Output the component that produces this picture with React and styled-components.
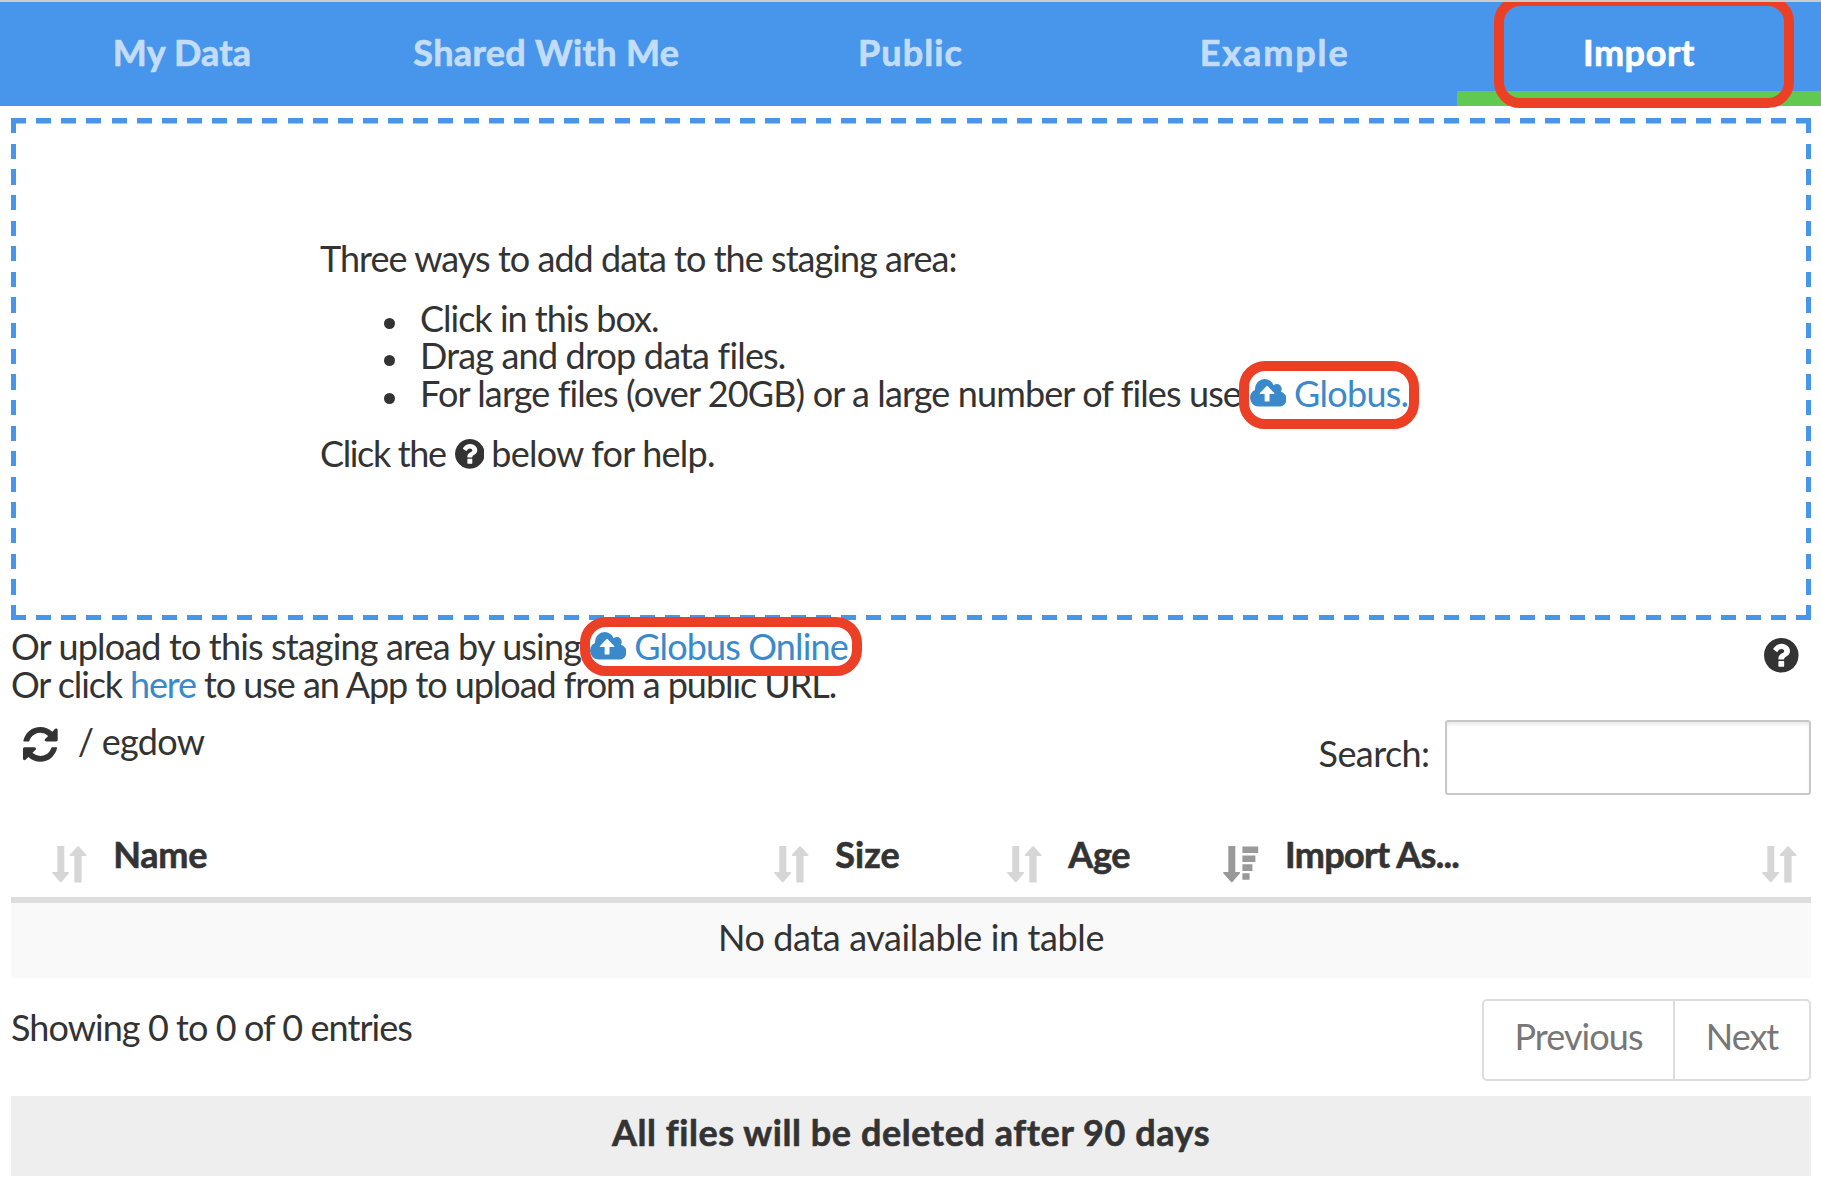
import React from 'react';
import styled, { createGlobalStyle } from 'styled-components';

const GlobalStyle = createGlobalStyle`
  * { box-sizing: border-box; }
  body { margin: 0; background: #fff; overflow: hidden; }
`;

const Page = styled.div`
  position: relative;
  width: 1821px;
  height: 1185px;
  overflow: hidden;
  border-top: 2px solid #c9cbcd;
  color: #333;
  font: 400 36px/37.7px Lato, 'Noto Sans', sans-serif;
`;

const Tabs = styled.nav`
  display: grid;
  grid-template-columns: repeat(5, 1fr);
  height: 104px;
  margin-bottom: 12px;
  background: #4796eb;
`;

const Tab = styled.a`
  display: flex;
  justify-content: center;
  padding-top: 32px;
  font-weight: 700;
  -webkit-text-stroke: 0.7px currentColor;
  letter-spacing: ${(p) => p.$ls}px;
  color: ${(p) => (p.$active ? '#fff' : '#c3ddf9')};
  border-bottom: 15px solid ${(p) => (p.$active ? '#61c94f' : 'transparent')};
`;

const Panel = styled.main`
  padding: 0 10px 0 11px;
`;

const blue = '#4796eb';
const DropZone = styled.section`
  height: 502px;
  padding: 122px 0 0 309px;
  background:
    repeating-linear-gradient(90deg, ${blue} 0 15px, transparent 15px 25.147px) top left / 100% 5.5px no-repeat,
    repeating-linear-gradient(90deg, ${blue} 0 15px, transparent 15px 25.147px) bottom left / 100% 5.5px no-repeat,
    repeating-linear-gradient(180deg, ${blue} 0 15.3px, transparent 15.3px 25.63px) top left / 5px 100% no-repeat,
    repeating-linear-gradient(180deg, ${blue} 0 15.3px, transparent 15.3px 25.63px) top right / 5px 100% no-repeat;
`;

const Line = styled.div`
  display: flex;
  align-items: center;
  height: 37.7px;
  white-space: pre;
`;

const Ways = styled.ul`
  list-style: none;
  margin: 22px 0 22.5px;
  padding: 0 0 0 64px;
`;

const Way = styled.li`
  display: flex;
  align-items: center;
  height: 37.7px;
  white-space: pre;
  &::before {
    content: '';
    width: 11px;
    height: 11px;
    margin: 9px 25px 0 0;
    border-radius: 50%;
    background: #333;
  }
`;

const Text = styled.span`
  letter-spacing: ${(p) => p.$ls}px;
  margin-left: ${(p) => p.$ml || 0}px;
`;

const Link = styled.a`
  display: inline-flex;
  align-items: center;
  color: #3a8acb;
  letter-spacing: ${(p) => p.$ls}px;
  margin-left: ${(p) => p.$ml || 0}px;
`;

const Icon = styled.svg`
  display: block;
  flex: none;
  width: ${(p) => p.$w}px;
  height: ${(p) => p.$h}px;
  margin: ${(p) => p.$m || 0};
  fill: currentColor;
`;

const UploadRow = styled.section`
  display: flex;
  justify-content: space-between;
  margin: 8px 0 17px;
`;

const HelpButton = styled.span`
  padding: 10px 12.5px 0 0;
`;

const Toolbar = styled.section`
  display: flex;
  justify-content: space-between;
  height: 75px;
`;

const Path = styled(Line)`
  padding-left: 12px;
  margin-top: 3px;
`;

const Search = styled.label`
  display: flex;
  padding-top: 14.5px;
  letter-spacing: -0.58px;
`;

const SearchInput = styled.input`
  width: 366px;
  height: 75px;
  margin: -14.5px 0 0 15.5px;
  border: 2px solid #c8c8c8;
  border-radius: 3px;
  box-shadow: inset 0 3px 3px rgba(0, 0, 0, 0.075);
  outline: none;
  background: #fff;
`;

const HeaderRow = styled.div`
  display: grid;
  grid-template-columns: 89.7px 722.1px 233px 216.8px 1fr;
  height: 108px;
  padding-top: 41px;
  border-bottom: 6px solid #ddd;
`;

const HeaderCell = styled.div`
  display: flex;
  justify-content: space-between;
  padding: 0 14.6px 0 12.5px;
  font-weight: 700;
  -webkit-text-stroke: 0.6px currentColor;
  letter-spacing: ${(p) => p.$ls}px;
`;

const EmptyRow = styled.div`
  height: 74.5px;
  padding-top: 15.5px;
  text-align: center;
  background: #f9f9f9;
  letter-spacing: -0.39px;
`;

const TableFooter = styled.div`
  display: flex;
  justify-content: space-between;
  padding-top: 21px;
  height: 118px;
`;

const Info = styled.div`
  padding-top: 10.5px;
  letter-spacing: -0.94px;
`;

const Pager = styled.div`
  display: flex;
  height: 82px;
  border: 2px solid #ddd;
  border-radius: 5px;
`;

const PageButton = styled.a`
  width: ${(p) => p.$w}px;
  padding-top: 17px;
  text-align: center;
  color: #777;
  letter-spacing: ${(p) => p.$ls}px;
  & + & { border-left: 2px solid #ddd; }
`;

const Notice = styled.footer`
  height: 80px;
  padding-top: 18.5px;
  text-align: center;
  font-weight: 700;
  -webkit-text-stroke: 0.6px currentColor;
  letter-spacing: 0.57px;
  background: #eee;
`;

/* Red callouts laid over the page */
const Callout = styled.div`
  position: absolute;
  left: ${(p) => p.$x}px;
  top: ${(p) => p.$y - 2}px;
  width: ${(p) => p.$w}px;
  height: ${(p) => p.$h}px;
  border: 10px solid #eb4026;
  border-radius: 26px;
  pointer-events: none;
`;

const CloudUpload = () => (
  <Icon viewBox="0 128 1920 1408" preserveAspectRatio="none" $w={36.6} $h={27.6} $m="0 8px 2px 0">
    <path fillRule="evenodd" d="M1280 864q0-14-9-23L919 489q-9-9-23-9t-23 9L522 840q-10 12-10 24 0 14 9 23t23 9h224v352q0 13 9.500 22.500t22.500 9.500h192q13 0 22.500-9.500t9.500-22.500v-352h224q13 0 22.500-9.500t9.500-22.500zM1920 1152q0 159-112.500 271.500t-271.500 112.500h-1088q-185 0-316.500-131.500t-131.500-316.500q0-130 70-240t188-165q-2-30-2-43 0-212 150-362t362-150q156 0 285.500 87t188.500 231q71-62 166-62 106 0 181 75t75 181q0 76-41 138 130 31 213.500 135.500t83.500 238.500z" />
  </Icon>
);

const Question = ({ size, m }) => (
  <Icon viewBox="0 128 1536 1536" $w={size} $h={size} $m={m}>
    <path fillRule="evenodd" d="M896 1376v-192q0-14-9-23t-23-9h-192q-14 0-23 9t-9 23v192q0 14 9 23t23 9h192q14 0 23-9t9-23zM1152 704q0-88-55.500-163t-138.500-116-170-41q-243 0-371 213-15 24 8 42l132 100q7 6 19 6 16 0 25-12 53-68 86-92 34-24 86-24 48 0 85.500 26t37.500 59q0 38-20 61t-68 45q-63 28-115.500 86.500t-52.500 125.500v36q0 14 9 23t23 9h192q14 0 23-9t9-23q0-19 21.500-49.500t54.500-49.500q32-18 49-28.500t46-35 44.500-48 28-60.500 12.500-81zM1536 896q0 209-103 385.500t-279.500 279.500-385.500 103-385.500-103-279.500-279.500-103-385.500 103-385.500 279.500-279.500 385.500-103 385.500 103 279.500 279.500 103 385.500z" />
  </Icon>
);

const Refresh = () => (
  <Icon viewBox="0 0 1536 1536" $w={34.7} $h={34.7} $m="5px 20px 0 0">
    <path d="M1511 928q0 5-1 7-64 268-268 434.500t-478 166.500q-146 0-282.500-55t-243.500-157l-129 129q-19 19-45 19t-45-19-19-45v-448q0-26 19-45t45-19h448q26 0 45 19t19 45-19 45l-137 137q71 66 161 102t187 36q134 0 250-65t186-179q11-17 53-117 8-23 30-23h192q13 0 22.500 9.500t9.500 22.500zM1536 128v448q0 26-19 45t-45 19h-448q-26 0-45-19t-19-45 19-45l138-138q-148-137-349-137-134 0-250 65t-186 179q-11 17-53 117-8 23-30 23h-199q-13 0-22.500-9.500t-9.500-22.500v-7q65-268 270-434.500t480-166.500q146 0 284 55.500t245 156.500l130-129q19-19 45-19t45 19 19 45z" />
  </Icon>
);

const SortIcon = styled(Icon).attrs({ viewBox: '0 0 34.6 36.6', $w: 34.6, $h: 36.6, $m: '9.5px 0 0 auto' })`
  color: ${(p) => (p.$sorted ? '#999' : '#d6d6d6')};
  overflow: visible;
`;

const DOWN = 'M5.300 0h7v26h4.200q1 .3 .4 1.200l-7.200 8.600q-.9 1-1.800 0l-7.600-8.600q-.6-.9 .4-1.200h4.600z';
const UP = 'M22.300 36.600h7.300v-26.600h4.200q1.200-.3 .5-1.300l-7.200-8q-1-1-2 0l-7.200 8q-.7 1 .5 1.300h3.900z';

const Sort = ({ sorted }) => (
  <SortIcon $sorted={sorted}>
    <path d={DOWN} />
    {sorted ? (
      <path d="M19.400 .5h15.800v6.500h-15.800zM19.400 9.500h13v6.500h-13zM19.400 18.300h10v6.600h-10zM19.400 27.300h7.200v6.400h-7.200z" />
    ) : (
      <path d={UP} />
    )}
  </SortIcon>
);

const tabs = [
  ['My Data', 0.2],
  ['Shared With Me', 0.35],
  ['Public', 1.1],
  ['Example', 1.9],
  ['Import', 0.58],
];

const columns = [
  ['', 0],
  ['Name', -0.23],
  ['Size', 0.1],
  ['Age', -0.3, true],
  ['Import As...', -0.7],
];

export default function App() {
  return (
    <Page>
      <GlobalStyle />
      <Tabs>
        {tabs.map(([label, ls]) => (
          <Tab key={label} $ls={ls} $active={label === 'Import'}>{label}</Tab>
        ))}
      </Tabs>
      <Panel>
        <DropZone>
          <Line><Text $ls={-0.96}>Three ways to add data to the staging area:</Text></Line>
          <Ways>
            <Way><Text $ls={-1}>Click in this box.</Text></Way>
            <Way><Text $ls={-0.82}>Drag and drop data files.</Text></Way>
            <Way>
              <Text $ls={-0.88}>For large files (over 20GB) or a large number of files use</Text>
              <Link $ls={-0.73} $ml={8.5}><CloudUpload />Globus.</Link>
            </Way>
          </Ways>
          <Line>
            <Text $ls={-1.36}>Click the</Text>
            <Question size={29.7} m="0 7px 0 9px" />
            <Text $ls={-0.77}>below for help.</Text>
          </Line>
        </DropZone>
        <UploadRow>
          <div>
            <Line>
              <Text $ls={-0.85}>Or upload to this staging area by using</Text>
              <Link $ls={-0.87} $ml={8.7}><CloudUpload />Globus Online</Link>
            </Line>
            <Line>
              <Text $ls={-1.1}>Or click</Text>
              <Link $ls={-1.15} $ml={8}>here</Link>
              <Text $ls={-1.05} $ml={8}>to use an App to upload from a public URL.</Text>
            </Line>
          </div>
          <HelpButton><Question size={34.6} /></HelpButton>
        </UploadRow>
        <Toolbar>
          <Path><Refresh /><Text $ls={-0.71}>/ egdow</Text></Path>
          <Search>Search:<SearchInput type="text" /></Search>
        </Toolbar>
        <HeaderRow>
          {columns.map(([label, ls, sorted]) => (
            <HeaderCell key={label} $ls={ls}>{label}<Sort sorted={sorted} /></HeaderCell>
          ))}
        </HeaderRow>
        <EmptyRow>No data available in table</EmptyRow>
        <TableFooter>
          <Info>Showing 0 to 0 of 0 entries</Info>
          <Pager>
            <PageButton $w={189}  $ls={-0.92}>Previous</PageButton>
            <PageButton $w={136} $ls={-1.04}>Next</PageButton>
          </Pager>
        </TableFooter>
        <Notice>All files will be deleted after 90 days</Notice>
      </Panel>
      <Callout $x={1494} $y={-4} $w={300} $h={112} />
      <Callout $x={1239} $y={361} $w={180} $h={68} />
      <Callout $x={580} $y={617} $w={282} $h={59} />
    </Page>
  );
}
